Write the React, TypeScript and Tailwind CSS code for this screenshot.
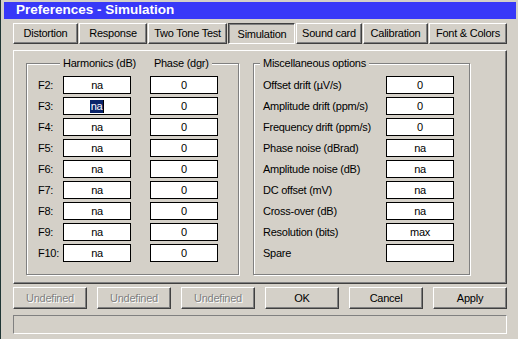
import React from "react";

const raised =
  "border border-t-white border-l-white border-r-[#404040] border-b-[#404040] shadow-[inset_-1px_-1px_0_#808080]";
const sunken =
  "border border-t-[#404040] border-l-[#404040] border-r-white border-b-white shadow-[inset_1px_1px_0_#808080]";

function Tab({ label, w, active }: { label: string; w: string; active?: boolean }) {
  return (
    <div
      className={`${w} h-[21px] flex items-center justify-center ${active ? sunken + " pt-[1px] pl-[1px]" : raised}`}
    >
      {label}
    </div>
  );
}

function Field({ value, selected }: { value: string; selected?: boolean }) {
  return (
    <div className="w-[68px] h-[18px] border border-black bg-white flex items-center justify-center">
      {selected ? (
        <span className="flex items-center">
          <span className="bg-[#0a246a] text-white leading-[13px] px-[0.5px]">{value}</span>
          <span className="w-[1px] h-[13px] bg-black" />
        </span>
      ) : (
        value
      )}
    </div>
  );
}

function Btn({ label, disabled }: { label: string; disabled?: boolean }) {
  return (
    <div
      className={`w-[74px] h-[22px] flex items-center justify-center ${raised} ${
        disabled ? "text-[#808080] [text-shadow:1px_1px_0_#ffffff]" : "text-black"
      }`}
    >
      {label}
    </div>
  );
}

const groupBox =
  "relative border border-[#808080] shadow-[inset_1px_1px_0_#ffffff,1px_1px_0_#ffffff] h-[212px]";

export default function App() {
  const harm = ["F2:", "F3:", "F4:", "F5:", "F6:", "F7:", "F8:", "F9:", "F10:"];
  const misc: [string, string][] = [
    ["Offset drift (\u00b5V/s)", "0"],
    ["Amplitude drift (ppm/s)", "0"],
    ["Frequency drift (ppm/s)", "0"],
    ["Phase noise (dBrad)", "na"],
    ["Amplitude noise (dB)", "na"],
    ["DC offset (mV)", "na"],
    ["Cross-over (dB)", "na"],
    ["Resolution (bits)", "max"],
    ["Spare", ""],
  ];
  return (
    <div
      className="w-[518px] h-[339px] overflow-hidden bg-[#d4d0c8] border-l border-[#1f3535] pl-[3px] pt-[2px] pr-[2px] text-[11px] tracking-[-0.25px] text-black"
      style={{ fontFamily: '"Liberation Sans", Arial, sans-serif' }}
    >
      <div className="h-[17px] bg-[#3838f8] pl-[12px] flex items-center text-white font-bold text-[13.5px] tracking-normal">
        Preferences - Simulation
      </div>
      <div className="pl-[9px] w-[503px]">
        <div className="mt-[4px] flex gap-[1px] w-[494px]">
          <Tab label="Distortion" w="w-[65px]" />
          <Tab label="Response" w="w-[68px]" />
          <Tab label="Two Tone Test" w="w-[79px]" />
          <Tab label="Simulation" w="w-[67px]" active />
          <Tab label="Sound card" w="w-[66px]" />
          <Tab label="Calibration" w="w-[65px]" />
          <Tab label="Font & Colors" w="w-[78px]" />
        </div>
        <div className={`mt-[6px] w-[494px] h-[234px] ${raised} pl-[12px] pt-[12px] flex gap-[14px]`}>
          <div className={`${groupBox} w-[213px] pl-[11px] pt-[12px]`}>
            <div className="absolute left-[33px] top-[-8px] h-[14px] px-[3px] bg-[#d4d0c8] flex items-center gap-[18px]">
              <span>Harmonics (dB)</span>
              <span>Phase (dgr)</span>
            </div>
            <div className="flex flex-col gap-[3px]">
              {harm.map((h, i) => (
                <div key={h} className="flex items-center h-[18px]">
                  <div className="w-[25px]">{h}</div>
                  <Field value="na" selected={i === 1} />
                  <div className="w-[19px]" />
                  <Field value="0" />
                </div>
              ))}
            </div>
          </div>
          <div className={`${groupBox} w-[217px] pl-[9px] pt-[12px]`}>
            <div className="absolute left-[6px] top-[-8px] h-[14px] px-[3px] bg-[#d4d0c8] flex items-center">
              <span>Miscellaneous options</span>
            </div>
            <div className="flex flex-col gap-[3px]">
              {misc.map(([l, v]) => (
                <div key={l} className="flex items-center h-[18px]">
                  <div className="w-[123px]">{l}</div>
                  <Field value={v} />
                </div>
              ))}
            </div>
          </div>
        </div>
        <div className="mt-[3px] w-[494px] flex justify-between">
          <Btn label="Undefined" disabled />
          <Btn label="Undefined" disabled />
          <Btn label="Undefined" disabled />
          <Btn label="OK" />
          <Btn label="Cancel" />
          <Btn label="Apply" />
        </div>
        <div className="mt-[6px] w-[494px] h-[19px] border border-t-[#808080] border-l-[#808080] border-r-white border-b-white" />
      </div>
    </div>
  );
}
